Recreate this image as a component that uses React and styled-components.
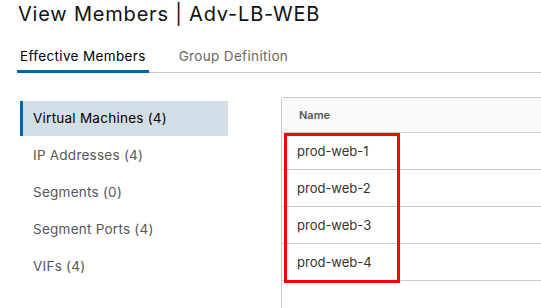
import React from "react";
import styled, { createGlobalStyle } from "styled-components";

const Global = createGlobalStyle`
  html, body { margin: 0; padding: 0; background: #fff; }
  body { font-family: Inter, "Open Sans", sans-serif; overflow: hidden; }
  * { box-sizing: border-box; }
`;

const Page = styled.div`
  width: 541px;
  height: 308px;
  overflow: hidden;
  display: flex;
  flex-direction: column;
`;

const Title = styled.h1`
  margin: 0;
  padding: 0 0 0 18px;
  height: 28px;
  line-height: 28px;
  font-size: 20px;
  font-weight: 400;
  letter-spacing: 0.8px;
  color: #111;
  white-space: nowrap;
`;

const TabBar = styled.div`
  display: flex;
  margin-left: 17px;
  margin-top: 15px;
  border-bottom: 1px solid #c8c8c8;
  gap: 27px;
`;

const Tab = styled.div`
  padding: 0 3px;
  height: 30px;
  line-height: 26px;
  font-size: 13.5px;
  letter-spacing: 0.35px;
  color: ${(p) => (p.$active ? "#000" : "#666")};
  border-bottom: 3px solid ${(p) => (p.$active ? "#0065ab" : "transparent")};
  margin-bottom: -1px;
  white-space: nowrap;
`;

const Body = styled.div`
  display: flex;
  padding-top: 24px;
  flex: 1;
`;

const Nav = styled.div`
  width: 208px;
  margin-left: 20px;
  margin-top: 4px;
  display: flex;
  flex-direction: column;
  gap: 2px;
`;

const NavItem = styled.div`
  height: 35px;
  line-height: 35px;
  padding-left: ${(p) => (p.$active ? "10px" : "13px")};
  font-size: 13.5px;
  letter-spacing: 0.25px;
  color: ${(p) => (p.$active ? "#000" : "#565656")};
  background: ${(p) => (p.$active ? "#d2dee5" : "transparent")};
  border-left: ${(p) => (p.$active ? "3px solid #0065ab" : "none")};
  white-space: nowrap;
`;

const Table = styled.div`
  position: relative;
  margin-left: 53px;
  flex: 1;
  border-left: 1px solid #ccc;
  border-top: 1px solid #ccc;
  border-top-left-radius: 3px;
  display: flex;
  flex-direction: column;
`;

const HeaderRow = styled.div`
  height: 35px;
  line-height: 35px;
  background: #fafafa;
  border-bottom: 1px solid #ccc;
  padding-left: 17px;
  font-size: 11px;
  font-weight: 600;
  color: #565656;
`;

const Row = styled.div`
  height: 37px;
  line-height: 37px;
  border-bottom: 1px solid #ccc;
  padding-left: 15px;
  font-size: 13px;
  color: #333;
`;

const Highlight = styled.div`
  position: absolute;
  left: 2px;
  top: 35px;
  width: 116px;
  height: 150px;
  border: 3px solid #ff0000;
  pointer-events: none;
`;

const navItems = [
  "Virtual Machines (4)",
  "IP Addresses (4)",
  "Segments (0)",
  "Segment Ports (4)",
  "VIFs (4)",
];

const rows = ["prod-web-1", "prod-web-2", "prod-web-3", "prod-web-4"];

export default function App() {
  return (
    <Page>
      <Global />
      <Title>View Members | Adv-LB-WEB</Title>
      <TabBar>
        <Tab $active>Effective Members</Tab>
        <Tab>Group Definition</Tab>
      </TabBar>
      <Body>
        <Nav>
          {navItems.map((n, i) => (
            <NavItem key={n} $active={i === 0}>
              {n}
            </NavItem>
          ))}
        </Nav>
        <Table>
          <HeaderRow>Name</HeaderRow>
          {rows.map((r) => (
            <Row key={r}>{r}</Row>
          ))}
          <Highlight />
        </Table>
      </Body>
    </Page>
  );
}
